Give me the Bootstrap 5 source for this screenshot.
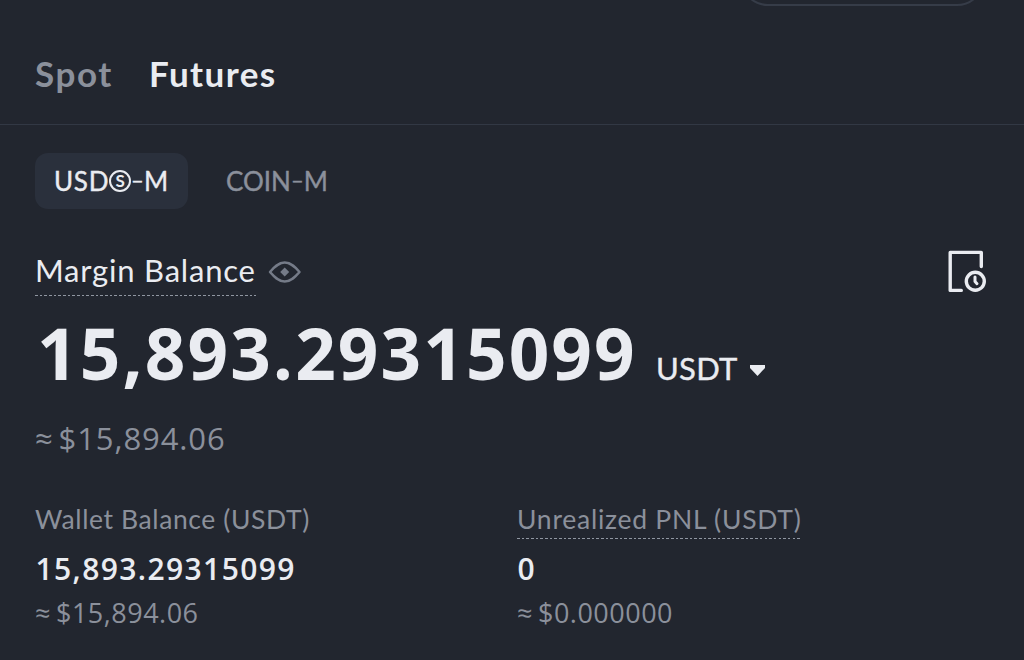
<!DOCTYPE html>
<html lang="en">
<head>
<meta charset="utf-8">
<meta name="viewport" content="width=device-width, initial-scale=1">
<title>Futures wallet</title>
<link href="https://cdn.jsdelivr.net/npm/bootstrap@5.3.0/dist/css/bootstrap.min.css" rel="stylesheet">
<style>
body{background:#22262f;color:#eaecf1;font-family:Lato,"Noto Sans",sans-serif;height:660px;overflow:hidden}
.digits{font-family:"Open Sans","Noto Sans",sans-serif}
.dim{color:#8b909b}
.strip{height:6px;padding-right:39px}
.pill-edge{width:245px;height:56px;border:2px solid #363c48;border-radius:28px}
.tabs{height:119px;border-bottom:1px solid #323844;padding:47px 35px 0;font-size:35px;line-height:40px;font-weight:700}
.tabs a,.kinds a{text-decoration:none;color:#8b909b;white-space:nowrap}
.tabs a.on,.kinds a.on{color:#eaecf1}
.tab-spot{width:114px;letter-spacing:1.6px}
.tab-fut{letter-spacing:1.4px}
.kinds{padding:28px 35px 0;font-size:26px;line-height:56px}
.kinds a{height:56px;-webkit-text-stroke:.4px currentColor}
.kind-usd{width:153px;padding-left:19px;background:#2a303c;border-radius:13px}
.kind-usd .usd{letter-spacing:.7px}
.kind-coin{margin-left:38px}
.dash{font-size:22px;display:inline-block;line-height:53px;vertical-align:top}
.ring{width:22px;height:22px;border:2px solid currentColor;border-radius:50%;font-size:17px;line-height:18px;font-weight:700;-webkit-text-stroke:0}
.main{padding:0 35px}
.title-row{height:43px;margin-top:44px}
.title{font-size:31px;line-height:34px;height:43px;letter-spacing:.8px;width:221px;white-space:nowrap}
.eye{margin-top:2px}
.history{margin-top:-3px}
.dots{background:repeating-linear-gradient(90deg,#9096a1 0 2.5px,transparent 2.5px 4.67px) left bottom/100% 1.5px no-repeat}
.amount{height:86px;line-height:86px;margin-top:14px}
.amount .big{font-size:71px;font-weight:700;letter-spacing:2.1px;width:621px;padding-left:2px}
.unit{font-size:31px;line-height:40px;padding-top:38px;letter-spacing:.3px;-webkit-text-stroke:.4px currentColor}
.caret{margin:55px 0 0 12px}
.approx{font-size:31px;line-height:40px;margin-top:22px;letter-spacing:.9px;word-spacing:-4px}
.cols{margin-top:45px}
.cols>div{width:482px;flex-shrink:0}
.lab{font-size:26.5px;line-height:32px;height:36px;letter-spacing:.6px;white-space:nowrap}
.lab.dots{letter-spacing:.75px;width:285px}
.val{font-size:30px;font-weight:600;line-height:40px;margin-top:10px;letter-spacing:1.4px;padding-left:.5px}
.sub{font-size:27px;line-height:36px;margin-top:6px;letter-spacing:.5px;word-spacing:-2.5px}
</style>
</head>
<body>
<div class="strip d-flex justify-content-end align-items-end overflow-hidden"><div class="pill-edge flex-shrink-0"></div></div>
<nav class="tabs d-flex">
  <a href="#" class="tab-spot">Spot</a><a href="#" class="tab-fut on">Futures</a>
</nav>
<div class="kinds d-flex">
  <a href="#" class="kind-usd on d-flex align-items-center"><span class="usd">USD</span><span class="ring d-inline-flex justify-content-center">S</span><span><span class="dash">–</span>M</span></a>
  <a href="#" class="kind-coin">COIN<span class="dash">–</span>M</a>
</div>
<main class="main">
  <div class="title-row d-flex justify-content-between">
    <div class="d-flex">
      <div class="title dots">Margin Balance</div>
      <svg class="eye ms-2" width="42" height="34" viewBox="0 0 42 34" fill="none"><path d="M6 17C9.500 13 14 7.500 20.700 7.500C27.500 7.500 32 13 35.500 17C32 21 27.500 26.500 20.700 26.500C14 26.500 9.500 21 6 17Z" stroke="#757b88" stroke-width="2.500" stroke-linejoin="round"/><path d="M20.700 12.500l4.500 4.500-4.500 4.500-4.500-4.500z" fill="#757b88"/></svg>
    </div>
    <svg class="history" width="42" height="43" viewBox="0 0 42 43" fill="none" stroke="#eaecf1" stroke-width="3.400" stroke-linecap="round" stroke-linejoin="round"><path d="M14.300 40.400H3.200V2.400H34.300V16.500"/><circle cx="28.300" cy="31.300" r="9"/><path d="M28 27V31.500L30 33.700" stroke-width="3"/></svg>
  </div>
  <div class="amount d-flex">
    <span class="big digits">15,893.29315099</span><span class="unit">USDT</span>
    <svg class="caret" width="15" height="11" viewBox="0 0 15 11"><path d="M0 0H15V3L7.500 11L0 3Z" fill="#eaecf1"/></svg>
  </div>
  <div class="approx digits dim">≈ $15,894.06</div>
  <div class="cols d-flex">
    <div>
      <div class="lab dim">Wallet Balance (USDT)</div>
      <div class="val digits">15,893.29315099</div>
      <div class="sub digits dim">≈ $15,894.06</div>
    </div>
    <div>
      <div class="lab dim dots">Unrealized PNL (USDT)</div>
      <div class="val digits">0</div>
      <div class="sub digits dim">≈ $0.000000</div>
    </div>
  </div>
</main>
<script src="https://cdn.jsdelivr.net/npm/bootstrap@5.3.0/dist/js/bootstrap.bundle.min.js"></script>
</body>
</html>
